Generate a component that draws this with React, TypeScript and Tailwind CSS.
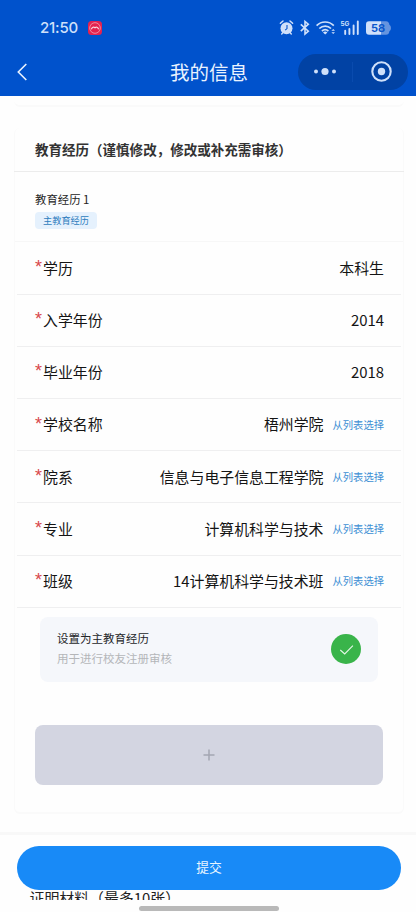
import React from "react";

interface FieldRow {
  label: string;
  value: string;
  selectable?: boolean;
}

const fields: FieldRow[] = [
  { label: "学历", value: "本科生" },
  { label: "入学年份", value: "2014" },
  { label: "毕业年份", value: "2018" },
  { label: "学校名称", value: "梧州学院", selectable: true },
  { label: "院系", value: "信息与电子信息工程学院", selectable: true },
  { label: "专业", value: "计算机科学与技术", selectable: true },
  { label: "班级", value: "14计算机科学与技术班", selectable: true },
];

const StatusBar = () => (
  <div className="flex h-[48px] items-center justify-between pl-10 pr-[24px] pt-[7px] text-[#cfe0fa]">
    <div className="flex items-center">
      <span className="w-[39px] whitespace-nowrap font-['Inter',sans-serif] text-[15px] font-medium leading-none tracking-[-0.2px]">
        21:50
      </span>
      <svg className="ml-[9px]" width="14" height="14" viewBox="0 0 14 14" fill="none">
        <rect width="14" height="14" rx="3.5" fill="#e4224f" />
        <circle cx="7" cy="7" r="5.3" stroke="#f5a3b5" strokeWidth="0.8" />
        <path d="M3.4 8.2C4.2 6 5.6 5.6 7 6.7C8.2 5.6 9.8 6 10.6 8.2" stroke="#fbdbe2" strokeWidth="1.2" />
      </svg>
    </div>
    <svg width="113" height="18" viewBox="279 19 113 18" fill="none">
      {/* Alarm */}
      <circle cx="286.5" cy="28.3" r="6" fill="#cfe0fa" />
      <path d="M280.4 23.3L283 21M292.6 23.3L290 21" stroke="#cfe0fa" strokeWidth="1.5" strokeLinecap="round" />
      <path d="M282.8 32.7L281.7 34M290.2 32.7L291.3 34" stroke="#cfe0fa" strokeWidth="1.4" strokeLinecap="round" />
      <path d="M287 25V28.6L285.2 30.2" stroke="#0352cb" strokeWidth="1.1" />
      {/* Bluetooth */}
      <path d="M300.8 24.4L308.3 31.2L305 34V21.5L308.3 24.2L300.8 31.2" stroke="#cfe0fa" strokeWidth="1.6" />
      {/* Wi-Fi */}
      <path d="M316.6 25.6C321.3 20.8 329 20.8 333.8 25.6M319.3 28.5C322.7 25.2 327.7 25.2 331 28.5M321.9 31C323.9 29.3 326.5 29.3 328.4 31" stroke="#cfe0fa" strokeWidth="1.7" />
      <path d="M323 32.4Q325.2 30.5 327.4 32.4L325.2 34.6Z" fill="#cfe0fa" />
      <path d="M331.4 30.8L333.2 29L335 30.8ZM331.4 32.2L333.2 34L335 32.2Z" fill="#cfe0fa" />
      {/* Signal */}
      <text x="340.4" y="26" fill="#cfe0fa" fontSize="6.4" fontWeight="700" fontFamily="Inter, sans-serif">5G</text>
      <path d="M345.2 34V30.8M349.4 34V29M353.6 34V25.4M357.8 34V21.4" stroke="#cfe0fa" strokeWidth="1.9" strokeLinecap="round" />
      {/* Battery */}
      <path d="M369 21.3H381V34.7H369Q366 34.7 366 31.7V24.3Q366 21.3 369 21.3Z" fill="#cfe0fa" />
      <path d="M381 21.3H386Q389 21.3 389.4 24.8Q391 25.8 391 28Q391 30.2 389.4 31.2Q389 34.7 386 34.7H381Z" fill="#6594df" />
      <text x="371" y="32" fill="#0a56cb" fontSize="11" fontWeight="700" fontFamily="Inter, sans-serif">58</text>
    </svg>
  </div>
);

const NavBar = () => (
  <div className="flex h-[48px] items-center pl-[17px] pr-2 text-[#eaf3ff]">
    <svg width="11" height="18" viewBox="0 0 11 18" fill="none">
      <path d="M9.3 1L1.3 9L9.3 17" stroke="currentColor" strokeWidth="1.6" />
    </svg>
    <h1 className="ml-[142px] text-[19.5px] leading-none">我的信息</h1>
    <div className="ml-auto h-9 w-[110px] rounded-full bg-[#0142a4]">
      <svg width="110" height="36" viewBox="0 0 110 36" fill="none">
        <circle cx="18" cy="17.5" r="2" fill="#cfe0fa" />
        <circle cx="27" cy="17.5" r="3.6" fill="#cfe0fa" />
        <circle cx="36" cy="17.5" r="2" fill="#cfe0fa" />
        <path d="M54.5 8V28" stroke="#0a4bae" />
        <circle cx="83.5" cy="17.5" r="9.2" stroke="#cfe0fa" strokeWidth="2.1" />
        <circle cx="83.5" cy="17.5" r="3.7" fill="#cfe0fa" />
      </svg>
    </div>
  </div>
);

const Field = ({ label, value, selectable }: FieldRow) => (
  <div className="mx-[3px] flex h-[52.2px] items-center justify-between border-b border-[#efeff0] pl-[18px] pr-[17px] text-[14.9px] text-[#141414]">
    <div className="flex items-center">
      <span className="w-[8px] pb-[2px] font-['Liberation_Sans',sans-serif] text-[18px] leading-none text-[#d8474b]">*</span>
      <span>{label}</span>
    </div>
    <div className="flex items-center">
      <span>{value}</span>
      {selectable && <button className="ml-[9px] text-[10.3px] text-[#3c8ed4]">从列表选择</button>}
    </div>
  </div>
);

export default function App() {
  return (
    <div className="flex h-[912px] w-[416px] flex-col overflow-hidden bg-[#fefefe] font-['Noto_Sans_CJK_SC',sans-serif]">
      <header className="h-[96.4px] shrink-0 bg-[#0052cc]">
        <StatusBar />
        <NavBar />
      </header>

      <main className="pl-[14px] pr-[12px]">
        <div className="h-[11px] rounded-b-md border-b-2 border-[#fafafa]" />

        <section className="mt-[20.6px] h-[686px] rounded-md border-x border-b-2 border-[#fafafa]">
          <h2 className="-mx-px flex h-[44px] items-center border-b border-[#ececec] pl-[21px] text-[13.52px] font-bold text-[#333]">
            教育经历（谨慎修改，修改或补充需审核）
          </h2>

          <div className="-mx-px">
            <div className="mx-px flex h-[70.4px] flex-col items-start border-b border-[#f7f7f7] pl-5 pt-[19px]">
              <div className="text-[11.4px] leading-4 text-[#252525]">教育经历 1</div>
              <span className="mt-[5px] flex h-[17px] w-[62px] items-center justify-center rounded-sm bg-[#e5f1fd] text-[9.2px] leading-none text-[#2e7dbd]">
                主教育经历
              </span>
            </div>

            {fields.map((field) => (
              <Field key={field.label} {...field} />
            ))}

            {/* Primary education toggle */}
            <div className="ml-[26px] mt-[9.2px] flex h-[65px] w-[338px] items-center justify-between rounded-lg bg-[#f5f7fb] px-[17px]">
              <div className="-mt-[3px] text-[11.5px] leading-[20px]">
                <div className="text-[#242629]">设置为主教育经历</div>
                <div className="text-[#b4b6b9]">用于进行校友注册审核</div>
              </div>
              <svg className="-mt-px" width="30" height="30" viewBox="0 0 30 30" fill="none">
                <circle cx="15" cy="15" r="15" fill="#39b44a" />
                <path d="M9.3 16L13.7 20L21.9 11.6" stroke="#e5f7e7" strokeWidth="1.1" />
              </svg>
            </div>

            <button className="ml-[21px] mt-[43px] flex h-[60px] w-[348px] items-center justify-center rounded-lg bg-[#d3d5e1]">
              <svg width="12" height="12" viewBox="0 0 12 12">
                <path d="M6 0.5V11.5M0.5 6H11.5" stroke="#a4a6b2" strokeWidth="1.5" />
              </svg>
            </button>
          </div>
        </section>
      </main>

      <footer className="mt-[18px] flex flex-col border-t-[3px] border-[#f8f8f8] pl-[17px] pr-[15px] pt-[11px]">
        <button className="h-[44px] w-[384px] shrink-0 rounded-full bg-[#188af7] pb-[2px] text-[12.8px] text-[#e9f5ff]">
          提交
        </button>
        <div className="h-[10px] overflow-hidden pl-[12.5px] text-[14.9px] leading-[16px] text-[#222]">
          证明材料（最多10张）
        </div>
        <div className="mt-[6px] h-[5px] w-[140px] self-center rounded-full bg-[#b9b9b9]" />
      </footer>
    </div>
  );
}
